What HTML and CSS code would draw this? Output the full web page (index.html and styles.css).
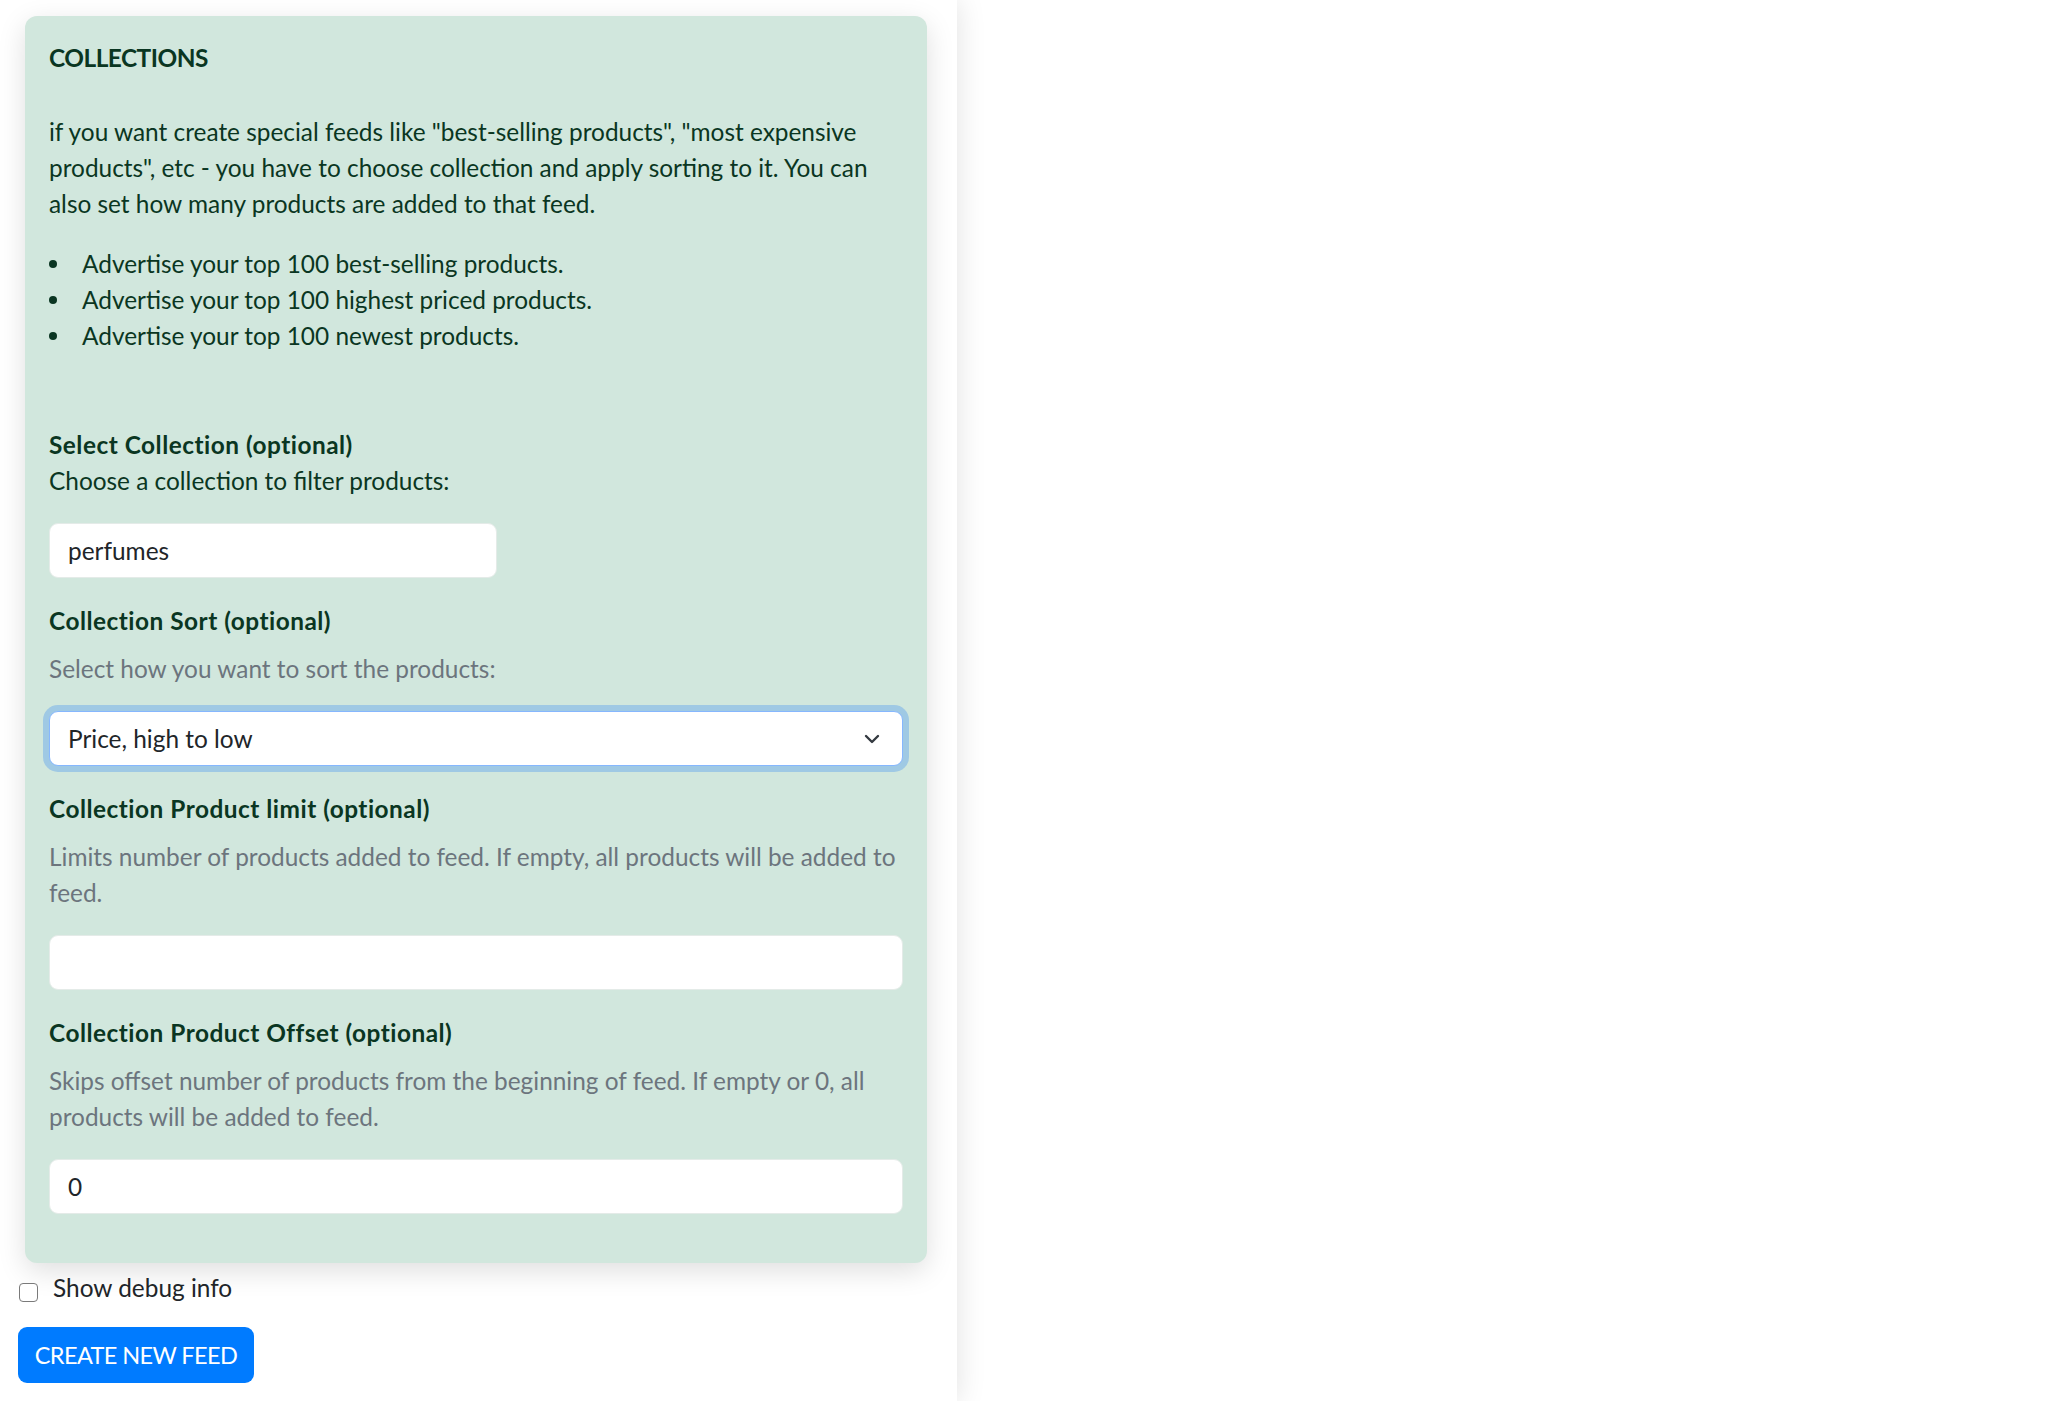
FILE: index.html
```html
<!DOCTYPE html>
<html lang="en">
<head>
<meta charset="utf-8">
<title>Collections</title>
<link rel="stylesheet" href="styles.css">
</head>
<body>
<div class="page">
  <div class="sidebar">
    <section class="card">
      <h2 class="card-title">COLLECTIONS</h2>
      <p class="intro">if you want create special feeds like "best-selling products", "most expensive products", etc - you have to choose collection and apply sorting to it. You can also set how many products are added to that feed.</p>
      <ul class="examples">
        <li>Advertise your top 100 best-selling products.</li>
        <li>Advertise your top 100 highest priced products.</li>
        <li>Advertise your top 100 newest products.</li>
      </ul>

      <div class="field field-first">
        <div class="label">Select Collection (optional)</div>
        <div class="desc desc-dark">Choose a collection to filter products:</div>
        <div class="input input-short">perfumes</div>
      </div>

      <div class="field">
        <div class="label">Collection Sort (optional)</div>
        <div class="desc">Select how you want to sort the products:</div>
        <div class="input select">
          <span>Price, high to low</span>
          <svg class="chevron" width="16" height="10" viewBox="0 0 16 10"><path d="M2 2 L8 8 L14 2" fill="none" stroke="#343a40" stroke-width="2.4" stroke-linecap="round" stroke-linejoin="round"/></svg>
        </div>
      </div>

      <div class="field">
        <div class="label">Collection Product limit (optional)</div>
        <div class="desc">Limits number of products added to feed. If empty, all products will be added to feed.</div>
        <div class="input"></div>
      </div>

      <div class="field">
        <div class="label">Collection Product Offset (optional)</div>
        <div class="desc">Skips offset number of products from the beginning of feed. If empty or 0, all products will be added to feed.</div>
        <div class="input">0</div>
      </div>
    </section>

    <label class="check">
      <span class="box"></span>
      <span>Show debug info</span>
    </label>

    <button class="btn">CREATE NEW FEED</button>
  </div>
  <div class="main"></div>
</div>
</body>
</html>
```
FILE: styles.css
```css
html, body {
  margin: 0;
  padding: 0;
  background: #ffffff;
}
body {
  font-family: Lato, "Noto Sans", sans-serif;
  font-size: 24.4px;
  line-height: 36px;
  color: #212529;
}
.page {
  display: flex;
  min-height: 1401px;
}
.sidebar {
  width: 957px;
  flex: none;
  box-sizing: border-box;
  padding: 16px 30px 20px 18px;
  background: #fff;
  box-shadow: 0 0 28px rgba(0, 0, 0, 0.12);
  position: relative;
  z-index: 1;
}
.main {
  flex: 1;
  background: #fff;
}
.card {
  margin-left: 7px;
  background: #d1e7dd;
  border-radius: 12px;
  padding: 24px 24px 49px;
  box-shadow: 0 8px 28px rgba(0, 0, 0, 0.13);
  color: #0a3622;
}
.card-title {
  margin: 0 0 38px;
  font-size: 24.4px;
  line-height: 36px;
  font-weight: 700;
  letter-spacing: -0.5px;
}
.intro {
  margin: 0 0 24px;
}
.examples {
  list-style: none;
  margin: 0;
  padding: 0;
}
.examples li {
  display: flex;
  align-items: center;
  gap: 25px;
}
.examples li::before {
  content: "";
  width: 8px;
  height: 8px;
  border-radius: 50%;
  background: #0a3622;
  flex: none;
}
.field {
  margin-top: 25px;
}
.field-first {
  margin-top: 73px;
}
.label {
  font-weight: 700;
  letter-spacing: 0.5px;
  margin-bottom: 12px;
}
.field-first .label {
  margin-bottom: 0;
}
.desc {
  color: #6c757d;
  margin-bottom: 24px;
}
.desc-dark {
  color: #0a3622;
}
.input {
  box-sizing: border-box;
  height: 55px;
  background: #fff;
  border: 1px solid #e4ebe8;
  border-radius: 9px;
  padding: 8px 18px;
  color: #212529;
  display: flex;
  align-items: center;
}
.input-short {
  width: 448px;
}
.select {
  justify-content: space-between;
  border-color: #86b7fe;
  box-shadow: 0 0 0 6px rgba(13, 110, 253, 0.25);
  padding-right: 22px;
}
.chevron {
  display: block;
}
.check {
  display: flex;
  align-items: center;
  gap: 15px;
  margin-top: 7px;
  margin-left: 1px;
}
.box {
  width: 19px;
  height: 19px;
  box-sizing: border-box;
  border: 1.5px solid #7a7a7a;
  border-radius: 4px;
  background: #fff;
  margin-top: 9px;
}
.btn {
  display: block;
  margin-top: 21px;
  width: 236px;
  height: 56px;
  border: none;
  border-radius: 9px;
  background: #007bff;
  color: #fff;
  font-family: inherit;
  font-size: 23.5px;
  letter-spacing: -0.6px;
  line-height: 36px;
  padding: 0;
}
```
